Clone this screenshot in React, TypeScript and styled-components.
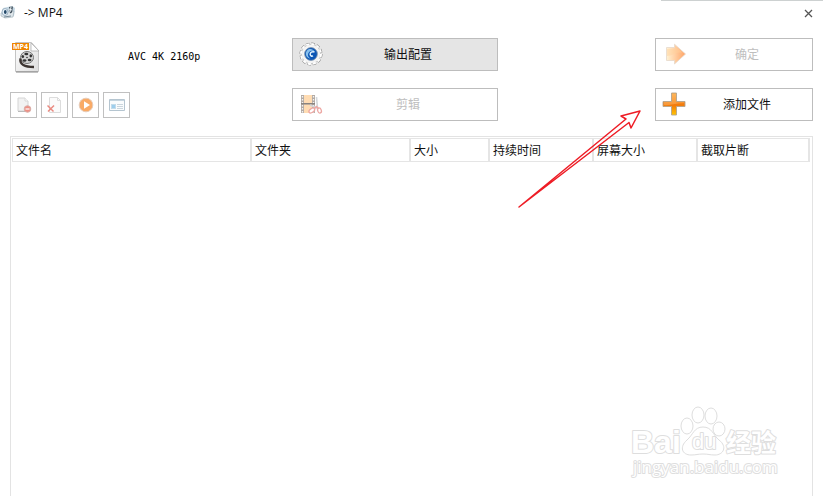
import React from "react";
import styled, { createGlobalStyle } from "styled-components";

const GlobalStyle = createGlobalStyle`
  *, *::before, *::after { box-sizing: border-box; }
  body {
    margin: 0;
    background: #fff;
    color: #111;
    font: 12px/16px "Liberation Sans", "Noto Sans CJK SC", sans-serif;
  }
`;

const Window = styled.div`
  position: relative;
  display: flex;
  flex-direction: column;
  min-height: 100vh;
  overflow: hidden;
`;

const TopEdge = styled.div`
  align-self: flex-end;
  width: 162px;
  height: 1px;
  background: #cdd1d1;
`;

const TitleBar = styled.header`
  display: flex;
  align-items: center;
  height: 24px;
  padding-right: 8px;
`;

const Title = styled.h1`
  flex: 1;
  margin: 0 0 0 8px;
  font: 400 12px/16px "Open Sans", "Noto Sans", sans-serif;
`;

const CloseButton = styled.button`
  display: flex;
  padding: 2px;
  border: 0;
  background: none;
`;

const Toolbar = styled.section`
  display: grid;
  grid-template-columns: 282px 206px 1fr 158px;
  row-gap: 17px;
  padding: 13px 10px 15px;
`;

const Format = styled.div`
  display: flex;
  align-items: center;
  height: 33px;
  padding-top: 4px;
`;

const FormatName = styled.span`
  flex: 1;
  padding-left: 88px;
  font: 10px/16px "DejaVu Sans Mono", monospace;
  color: #000;
`;

const ActionButton = styled.button<{ $filled?: boolean; $last?: boolean }>`
  display: grid;
  grid-template-columns: 26px 1fr;
  align-items: center;
  grid-column: ${(p) => (p.$last ? 4 : 2)};
  height: 33px;
  padding: 0 6px 2px;
  border: 1px solid #bdbdbd;
  background: ${(p) => (p.$filled ? "#e5e5e5" : "#fff")};
  color: #111;
  font: 12px/16px "Noto Sans CJK SC", sans-serif;
  &:disabled { color: #bebebe; }
  svg { display: block; }
`;

const SmallTools = styled.div`
  display: flex;
  gap: 4px;
  padding-top: 4px;
`;

const ToolButton = styled.button`
  display: flex;
  align-items: center;
  justify-content: center;
  width: 27px;
  height: 26px;
  padding: 0;
  border: 1px solid #c0c0c0;
  background: #fff;
`;

const ListPanel = styled.main`
  flex: 1;
  margin: 0 10px;
  padding: 1px 2px 0 1px;
  border: 1px solid #e3e3e3;
  border-bottom: 0;
`;

const FileTable = styled.table`
  width: 100%;
  table-layout: fixed;
  border-collapse: separate;
  border-spacing: 0;
  border-left: 1px solid #e5e5e5;
`;

const HeadCell = styled.th<{ $width?: number }>`
  width: ${(p) => (p.$width ? `${p.$width}px` : "auto")};
  height: 24px;
  padding: 0 3px;
  border: 1px solid #e5e5e5;
  border-left: 0;
  border-right-width: 2px;
  text-align: left;
  font: 400 12px/16px "Noto Sans CJK SC", sans-serif;
`;

const ArrowOverlay = styled.svg`
  position: absolute;
  top: 109px;
  right: 181px;
  pointer-events: none;
`;

const Watermark = styled.svg`
  position: absolute;
  right: 38px;
  bottom: 14px;
  pointer-events: none;
`;

const AppIcon = () => (
  <svg width="16" height="16" viewBox="0 0 16 16" aria-hidden="true">
    <path d="M3 3l9-2 3 2-1 8-8 2-5-3z" fill="#c5d7e2" />
    <path d="M1 8l5-1 8-1-1 6-8 1-4-2z" fill="#dfe6ea" stroke="#9cacb6" strokeWidth=".6" />
    <ellipse cx="5" cy="7" rx="3" ry="3.5" fill="#e9f3fa" stroke="#9db2c3" />
    <ellipse cx="5.3" cy="7" rx="1.4" ry="2" fill="#244969" />
    <path d="M9 2l4-.5-1 6-2 1z" fill="#41505c" />
    <path d="M9 4l3 1M11 2l-1 5" stroke="#eef4f8" />
    <path d="M4 12l7-1" stroke="#788b98" />
  </svg>
);

const FormatIcon = () => (
  <svg width="30" height="34" viewBox="0 0 30 34" aria-hidden="true">
    <defs>
      <linearGradient id="sheet" x2="1" y2="1"><stop stopColor="#fff" /><stop offset="1" stopColor="#dedede" /></linearGradient>
    </defs>
    <path d="M5.5 2.500h16l7 8v21h-23z" fill="url(#sheet)" stroke="#c4c4c4" />
    <path d="M6 32h22" stroke="#858585" />
    <path d="M21 3v8h8z" fill="#fff" stroke="#a8a8a8" strokeWidth=".7" />
    <ellipse cx="17" cy="17.500" rx="6.500" ry="6" fill="#d5d5d5" stroke="#777" />
    <ellipse cx="16.300" cy="14" rx="2" ry="1.300" fill="#333" />
    <ellipse cx="20.800" cy="15.800" rx="1.300" ry="1.600" fill="#333" />
    <ellipse cx="19.600" cy="20" rx="1.900" ry="1.300" fill="#333" />
    <ellipse cx="14.500" cy="20.500" rx="1.900" ry="1.300" fill="#333" />
    <ellipse cx="12.800" cy="16.500" rx="1.300" ry="1.500" fill="#333" />
    <circle cx="17" cy="17.500" r=".8" fill="#333" />
    <path d="M10.500 18.500c-1 6 4 8.500 13.500 8.500" fill="none" stroke="#3c3431" strokeWidth="2.400" />
    <path d="M2 3h17v7H2z" fill="#ef8500" />
    <text x="10.500" y="9.300" textAnchor="middle" fontFamily="Open Sans, sans-serif" fontSize="7" fontWeight="700" fill="#fff">MP4</text>
  </svg>
);

const GearIcon = () => (
  <svg width="24" height="24" viewBox="0 0 24 24" aria-hidden="true">
    <circle cx="12" cy="12" r="10" fill="none" stroke="#808080" strokeWidth="3" strokeDasharray="3.4 1.836" />
    <circle cx="12" cy="12" r="9.600" fill="#f4f4f4" stroke="#b5b5b5" strokeWidth=".6" />
    <circle cx="12" cy="12" r="10" fill="none" stroke="#fff" strokeWidth="2" strokeDasharray="3.2 2.036" />
    <circle cx="12" cy="12" r="6.400" fill="#0b55b5" stroke="#8295ab" strokeWidth=".8" />
    <path d="M15.500 9.500c-3-2-6.500 0-6.500 3.500 0 1.500 1 2.800 2.500 3.400-4.300-.2-6-5-3.500-8 2-2.200 6-2 7.500 1.100z" fill="#86c0ee" />
    <path d="M15.500 10c-2.500-.8-4.500.5-4.300 2.500.1 1.500 1.600 2 2.800 1.300" fill="none" stroke="#e0f2ff" strokeWidth="1.500" />
  </svg>
);

const ClipIcon = () => (
  <svg width="24" height="24" viewBox="0 0 24 24" aria-hidden="true">
    <path d="M2 3h14v18H2z" fill="#b2aaa4" />
    <path d="M5 3h8v8H5zM5 12.500h8V21H5z" fill="#ffdcb3" />
    <path d="M3.500 4v17M14.500 4v17" stroke="#f5f5f5" strokeWidth="1.300" strokeDasharray="1.500 1.500" />
    <path d="M2 11.700h14" stroke="#857f7b" strokeWidth="1.200" />
    <path d="M17.500 5l1 11M11 13l9 4" stroke="#d3d7da" strokeWidth="1.600" />
    <path d="M18 14l-3 3M18 15l2 2" stroke="#eda7a3" strokeWidth="1.500" />
    <ellipse cx="12.800" cy="18.500" rx="3.200" ry="1.900" transform="rotate(-35 12.800 18.500)" fill="#fff" stroke="#eda7a3" strokeWidth="1.300" />
    <ellipse cx="20.500" cy="18.500" rx="1.800" ry="2.600" transform="rotate(-20 20.500 18.500)" fill="#fff" stroke="#eda7a3" strokeWidth="1.300" />
  </svg>
);

const ConfirmIcon = () => (
  <svg width="24" height="24" viewBox="0 0 24 24" aria-hidden="true">
    <defs><linearGradient id="confirm"><stop stopColor="#fff3d5" /><stop offset="1" stopColor="#ffa365" /></linearGradient></defs>
    <path d="M4.500 5.500h8V2.200L23.500 12 12.500 22v-3.500h-8z" fill="url(#confirm)" stroke="#e6d8cc" strokeWidth=".8" />
    <path d="M5 14c6 0 9-5 16-3l-8-7v3H5z" fill="#ffd09b" opacity=".45" />
  </svg>
);

const AddIcon = () => (
  <svg width="24" height="24" viewBox="0 0 24 24" aria-hidden="true">
    <defs><linearGradient id="add" x2="0" y2="1"><stop stopColor="#ffad45" /><stop offset=".55" stopColor="#f27a0c" /><stop offset="1" stopColor="#ffc400" /></linearGradient></defs>
    <path d="M9.500 1h5v8.500H23v5h-8.500V23h-5v-8.500H1v-5h8.500z" fill="url(#add)" stroke="#b3a48f" strokeWidth=".9" strokeLinejoin="round" />
    <path d="M2 13c6 1 12-2 20-2v-.8h-8V2h-4v8H2z" fill="#ffc27b" opacity=".4" />
  </svg>
);

const RemoveIcon = () => (
  <svg width="16" height="16" viewBox="0 0 16 16" aria-hidden="true">
    <path d="M2 1h7l3 3v10H2z" fill="#f2f2f2" stroke="#d4d4d4" /><path d="M9 1v3h3" fill="#fff" stroke="#d8d8d8" />
    <path d="M2 14.500h9" stroke="#bbb" />
    <circle cx="11.500" cy="12" r="3.300" fill="#ee8f84" stroke="#d9afa9" /><path d="M9.500 12h4" stroke="#fff" strokeWidth="1.200" />
  </svg>
);

const ClearIcon = () => (
  <svg width="16" height="16" viewBox="0 0 16 16" aria-hidden="true">
    <path d="M2.500.500h8l3 3v12h-11z" fill="#fbfbfb" stroke="#dcdcdc" /><path d="M10.500.500v3h3" fill="none" stroke="#dcdcdc" />
    <path d="M.500 8.500l6 6M7 8.500l-6 6" stroke="#ea8a80" strokeWidth="1.500" />
  </svg>
);

const PlayIcon = () => (
  <svg width="16" height="16" viewBox="0 0 16 16" aria-hidden="true">
    <circle cx="8" cy="8" r="6.800" fill="#f9aa66" stroke="#e6cbb8" /><path d="M6 4.300v7.400L12 8z" fill="#fff" />
  </svg>
);

const InfoIcon = () => (
  <svg width="16" height="16" viewBox="0 0 16 16" aria-hidden="true">
    <path d="M.500 2.500h15v11H.500z" fill="#fafcfd" stroke="#b5c5d0" /><path d="M1 3.500h14" stroke="#c6d5df" />
    <rect x="2.500" y="7.500" width="4" height="4" fill="#9dceed" stroke="#c3dceb" />
    <path d="M8 7.500h6M8 9.500h6M8 11.500h6" stroke="#cbd6dd" />
  </svg>
);

const columns = [
  { label: "文件名", width: 239 },
  { label: "文件夹", width: 159 },
  { label: "大小", width: 79 },
  { label: "持续时间", width: 104 },
  { label: "屏幕大小", width: 104 },
  { label: "截取片断" },
];

const tools = [
  { label: "移除", Icon: RemoveIcon },
  { label: "清空", Icon: ClearIcon },
  { label: "播放", Icon: PlayIcon },
  { label: "信息", Icon: InfoIcon },
];

export default function App() {
  return (
    <>
      <GlobalStyle />
      <Window>
        <TopEdge />
        <TitleBar>
          <AppIcon />
          <Title>-&gt; MP4</Title>
          <CloseButton aria-label="关闭">
            <svg width="9" height="9" viewBox="0 0 9 9"><path d="M1 1l7 7M8 1L1 8" stroke="#555" strokeWidth="1.300" /></svg>
          </CloseButton>
        </TitleBar>

        <Toolbar>
          <Format><FormatIcon /><FormatName>AVC 4K 2160p</FormatName></Format>
          <ActionButton $filled><GearIcon /><span>输出配置</span></ActionButton>
          <ActionButton $last disabled><ConfirmIcon /><span>确定</span></ActionButton>
          <SmallTools>
            {tools.map(({ label, Icon }) => (
              <ToolButton key={label} aria-label={label} disabled><Icon /></ToolButton>
            ))}
          </SmallTools>
          <ActionButton disabled><ClipIcon /><span>剪辑</span></ActionButton>
          <ActionButton $last><AddIcon /><span>添加文件</span></ActionButton>
        </Toolbar>

        <ListPanel>
          <FileTable>
            <thead>
              <tr>
                {columns.map((c) => <HeadCell key={c.label} $width={c.width} scope="col">{c.label}</HeadCell>)}
              </tr>
            </thead>
          </FileTable>
        </ListPanel>

        <ArrowOverlay width="125" height="101" viewBox="0 0 125 101" aria-hidden="true">
          <path d="M2 98L109 10l-5-3 19-5-9 17-2-5.500z" fill="none" stroke="#ee1c25" strokeWidth="1.500" strokeLinejoin="round" />
        </ArrowOverlay>

        <Watermark width="156" height="78" viewBox="0 0 156 78">
          <g fill="#fff" stroke="#dedede" strokeWidth="1">
            <ellipse cx="58" cy="22" rx="6" ry="8" />
            <ellipse cx="69" cy="11" rx="6" ry="8" />
            <ellipse cx="82" cy="12" rx="6" ry="8" />
            <ellipse cx="90" cy="25" rx="6" ry="7" />
            <path d="M74 23c9 0 10 8 16 13 9 7 4 15-4 15-5 0-7-1-12-1s-7 1-12 1c-9 0-12-8-4-15 6-5 7-13 16-13z" />
          </g>
          <g fill="#fff" stroke="#dedede" strokeWidth="2" strokeLinejoin="round" paintOrder="stroke">
            <text x="2" y="49" fontFamily="Liberation Sans, sans-serif" fontSize="32" fontWeight="700">Bai</text>
            <text x="63" y="45" fontFamily="Liberation Sans, sans-serif" fontSize="22">du</text>
            <text x="97" y="48" fontFamily="Noto Sans CJK SC, sans-serif" fontSize="25" fontWeight="700">经验</text>
            <text x="4" y="69" fontFamily="Open Sans, sans-serif" fontSize="17">jingyan.baidu.com</text>
          </g>
        </Watermark>
      </Window>
    </>
  );
}
